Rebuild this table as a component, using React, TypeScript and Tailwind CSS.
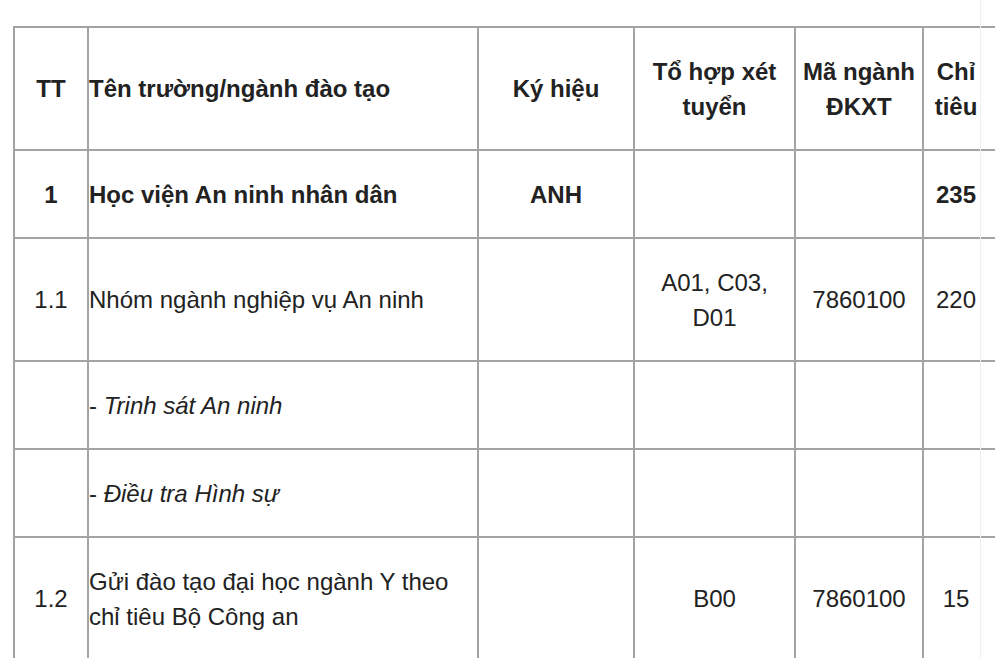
import React from 'react';

type Cell = {
  text?: React.ReactNode;
  bold?: boolean;
  align?: 'center' | 'left';
};

const rows: Cell[][] = [
  [
    { text: '1', bold: true, align: 'center' },
    { text: 'Học viện An ninh nhân dân', bold: true },
    { text: 'ANH', bold: true, align: 'center' },
    {},
    {},
    { text: '235', bold: true, align: 'center' },
  ],
  [
    { text: '1.1', align: 'center' },
    { text: 'Nhóm ngành nghiệp vụ An ninh' },
    {},
    { text: 'A01, C03, D01', align: 'center' },
    { text: '7860100', align: 'center' },
    { text: '220', align: 'center' },
  ],
  [
    {},
    { text: <>- <em>Trinh sát An ninh</em></> },
    {},
    {},
    {},
    {},
  ],
  [
    {},
    { text: <>- <em>Điều tra Hình sự</em></> },
    {},
    {},
    {},
    {},
  ],
  [
    { text: '1.2', align: 'center' },
    { text: 'Gửi đào tạo đại học ngành Y theo chỉ tiêu Bộ Công an' },
    {},
    { text: 'B00', align: 'center' },
    { text: '7860100', align: 'center' },
    { text: '15', align: 'center' },
  ],
];

const headers: Cell[] = [
  { text: 'TT', align: 'center' },
  { text: 'Tên trường/ngành đào tạo' },
  { text: 'Ký hiệu', align: 'center' },
  { text: 'Tổ hợp xét tuyển', align: 'center' },
  { text: 'Mã ngành ĐKXT', align: 'center' },
  { text: 'Chỉ tiêu', align: 'center' },
];

const cellBase = 'border-2 border-[#a3a3a3] py-[25.5px] align-middle';

const padFor = (c: Cell, i: number) => {
  if (i === 5) return 'text-center pl-0 pr-[9px]';
  return c.align === 'center' ? 'text-center px-1' : 'text-left pl-0 pr-1';
};

const App: React.FC = () => {
  return (
    <div className="relative w-[1000px] h-[658px] overflow-hidden bg-white font-['Liberation_Sans',Arial,sans-serif] text-[24px] leading-[35px] text-[#222]">
      <div className="ml-[13px] mt-[26px] w-[982px] overflow-hidden">
        <table className="table-fixed border-collapse w-[984px]">
          <colgroup>
            <col className="w-[74px]" />
            <col className="w-[390px]" />
            <col className="w-[156px]" />
            <col className="w-[161px]" />
            <col className="w-[128px]" />
            <col className="w-[75px]" />
          </colgroup>
          <thead>
            <tr>
              {headers.map((h, i) => (
                <th key={i} className={`${cellBase} font-bold ${padFor(h, i)}`}>
                  {h.text}
                </th>
              ))}
            </tr>
          </thead>
          <tbody>
            {rows.map((row, r) => (
              <tr key={r}>
                {row.map((c, i) => (
                  <td
                    key={i}
                    className={`${cellBase} ${c.bold ? 'font-bold' : 'font-normal'} ${padFor(c, i)}`}
                  >
                    {c.text}
                  </td>
                ))}
              </tr>
            ))}
          </tbody>
        </table>
      </div>
      <div className="absolute left-[980px] top-0 h-full w-px bg-[#f0f0f0]" />
    </div>
  );
};

export default App;
